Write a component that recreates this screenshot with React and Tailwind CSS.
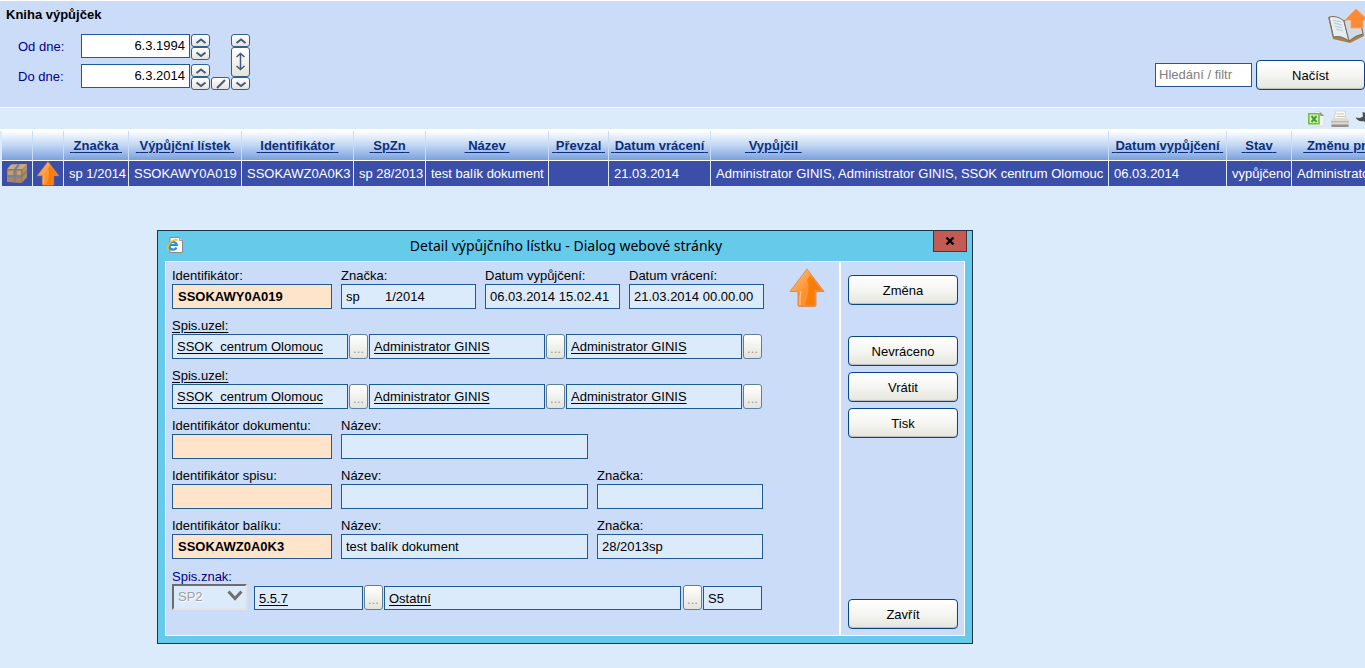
import React, { useState } from 'react';
import clsx from 'clsx';

const UpArrow = ({ className }) => (
  <svg viewBox="0 0 36 40" className={className} aria-hidden="true">
    <defs>
      <linearGradient id="arrowFill" x1="0" y1="0" x2="1" y2="1">
        <stop offset="0" stopColor="#ffc48c" />
        <stop offset="0.5" stopColor="#ff932f" />
        <stop offset="1" stopColor="#f98a1c" />
      </linearGradient>
    </defs>
    <path d="M18 1 L35 23.500 H27 V37 Q27 38.500 25.500 38.500 H10.500 Q9 38.500 9 37 V23.500 H1 Z" fill="url(#arrowFill)" stroke="#dc8a55" strokeWidth="1" strokeLinejoin="round" />
    <path d="M18 12 Q22 20 16 37 H25.500 V22 H32 L21 7 Z" fill="#f57800" opacity="0.8" />
    <path d="M11 37 Q10.500 28 12 23" stroke="#ffd0a0" strokeWidth="1" fill="none" />
  </svg>
);

const BoxIcon = () => (
  <svg viewBox="0 0 22 21" className="mx-auto h-[21px] w-[22px]" aria-hidden="true">
    <path d="M1 6.500 L5 1.500 L21 1 V14 L15.500 20 L1 19 Z" fill="#a98462" />
    <path d="M1 6.500 L5 1.500 L21 1 L16 6.500 Z" fill="#c4ac8c" />
    <path d="M16 6.500 L21 1 V14 L15.500 20 Z" fill="#b98a5a" />
    <path d="M2 8 H7 V12 H2 Z M11 8 H15 V12 H11 Z" fill="#c29e76" />
    <path d="M9 6.500 V19.500 M9 6.500 L13 1.500" stroke="#7d8286" strokeWidth="2.200" fill="none" />
    <path d="M1 13 L15.500 13.500 L21 8" stroke="#7d8286" strokeWidth="1.800" fill="none" />
    <path d="M1 6.500 H16 V19.500" stroke="#8a6a4e" strokeWidth="0.700" fill="none" />
  </svg>
);

const BookIcon = () => (
  <svg viewBox="0 0 38 36" className="h-9 w-[38px] shrink-0" aria-hidden="true">
    <path d="M1 9 L6 31 L23 35 L37 28 L35 18 L18 13 Z" fill="#a9804e" />
    <path d="M2 9 Q10 7 17 13 L22 33 Q14 27 6.500 29 Z" fill="#e3edf3" stroke="#7c6a52" strokeWidth="1" />
    <path d="M17 13 Q22 8 32 9 L36 26 Q29 27 22 33 Z" fill="#cfdce6" stroke="#7c6a52" strokeWidth="1" />
    <path d="M6 12 L14 14 M7 15 L15 17 M8 18 L15 20 M9 21 L16 23" stroke="#b4c6d3" strokeWidth="1" />
    <path d="M29 1 L41 12 H36 V20 H24 V12 H18 Z" fill="#fb8a33" stroke="#f3a56a" strokeWidth="1" />
  </svg>
);

const ExcelIcon = () => (
  <svg viewBox="0 0 18 16" className="h-4 w-[18px]" aria-hidden="true">
    <path d="M8 0.500 H13 L17 5 V15 H8 Z" fill="#f3f5f3" stroke="#d3d8d3" strokeWidth="0.800" />
    <path d="M12.500 0.500 L17 5 L13.500 5 Z" fill="#8a928a" />
    <path d="M1.800 2.800 H12 V12.800 H1.800 Z" fill="#d9f2c8" stroke="#6cc23f" strokeWidth="1.600" />
    <path d="M4.500 5 L9.500 11 M9.500 5 L4.500 11" stroke="#3fa51c" strokeWidth="2" />
  </svg>
);

const PrinterIcon = () => (
  <svg viewBox="0 0 20 18" className="h-[18px] w-5" aria-hidden="true">
    <path d="M6 1 H15 L16 9 H4 Z" fill="#faf8f4" stroke="#d2cec8" strokeWidth="0.800" />
    <path d="M6.500 4 H14 M6.500 6.500 H15" stroke="#cdc6bc" strokeWidth="1" />
    <path d="M3 8 H17 L19 11 V16 H1 V11 Z" fill="#dedbd6" />
    <path d="M1 11 H19 V12.500 H1 Z" fill="#bcb8b2" />
    <path d="M1.500 14.500 H18.500 V17 H1.500 Z" fill="#95918c" />
  </svg>
);

const WrenchIcon = () => (
  <svg viewBox="0 0 18 18" className="h-[18px] w-[18px] shrink-0" aria-hidden="true">
    <path d="M7.500 2 L11 3 L12.500 7 L17.500 13 L14.500 16 L8.500 11 Q3 12 0.500 7.500 L5 8 L8 6.500 Z" fill="#4d4f52" />
  </svg>
);

const PageIcon = () => (
  <svg viewBox="0 0 16 16" className="h-4 w-4" aria-hidden="true">
    <path d="M3 0.500 H12.500 L15.500 3.500 V15.500 H3 Z" fill="#fbfbfb" stroke="#8a8a8a" strokeWidth="1" />
    <path d="M12.500 0.500 V3.500 H15.500" fill="#dedede" stroke="#8a8a8a" strokeWidth="0.800" />
    <path d="M9.500 10.500 A3.800 3.800 0 1 1 9.800 8 H3" fill="none" stroke="#2a8fd6" strokeWidth="2.200" />
    <path d="M1.500 13.500 Q-1 10 4 5 Q8.500 1.500 10.500 3.500" fill="none" stroke="#f0bf1e" strokeWidth="1.600" />
  </svg>
);

const glyphs = {
  up: 'M3.500 7 L8 3.500 L12.500 7',
  down: 'M3.500 3.500 L8 7 L12.500 3.500',
  slash: 'M4 9 L12 1',
};

const SpinButton = ({ glyph, label }) => (
  <button
    type="button"
    aria-label={label}
    className="flex h-[13px] w-[19px] items-center justify-center rounded-[3px] border border-[#2f6195] bg-linear-to-b from-white to-[#e4e4dc]"
  >
    <svg viewBox="0 0 16 10" className="h-[10px] w-4" aria-hidden="true">
      <path d={glyphs[glyph]} fill="none" stroke="#45597c" strokeWidth="2" />
    </svg>
  </button>
);

const DateRow = ({ label, value, onChange }) => (
  <div className="flex h-[26px] items-start">
    <label className="flex items-start text-[#00008b]">
      <span className="w-[63px] leading-[26px]">{label}</span>
      <input
        value={value}
        onChange={(e) => onChange(e.target.value)}
        className="h-6 w-[109px] border border-[#1f5a92] bg-white pr-1 pb-[2px] text-right text-black outline-none"
      />
    </label>
    <div className="ml-px flex flex-col">
      <SpinButton glyph="up" label={`${label} +`} />
      <SpinButton glyph="down" label={`${label} -`} />
    </div>
  </div>
);

const PushButton = ({ children, className }) => (
  <button
    type="button"
    className={clsx(
      'h-[30px] rounded-[4px] border border-[#0d4580] bg-linear-to-b from-white via-[#f5f5f2] to-[#e6e6de] pt-[2px] text-center shadow-[inset_0_-1px_1px_#b9bdbd]',
      className
    )}
  >
    {children}
  </button>
);

const MoreButton = ({ className }) => (
  <button
    type="button"
    aria-label="Vybrat"
    className={clsx(
      'flex h-[25px] w-[19px] shrink-0 items-end justify-center rounded-[3px] border border-[#5f7f9f] bg-linear-to-b from-white to-[#e4e4dc] leading-[18px] text-[#9a9a9a]',
      className
    )}
  >
    ...
  </button>
);

const boxStyle = 'border border-[#1f5a92] px-1 outline-none';

const Field = ({ label, value = '', className, peach }) => (
  <label className={clsx('flex flex-col', className)}>
    <span className="h-[17px] leading-[18px]">{label}</span>
    <input
      readOnly
      value={value}
      className={clsx(boxStyle, 'h-[25px] w-full', peach ? 'bg-[#ffe4cc] pl-[5px] font-bold' : 'bg-[#dcebfc]')}
    />
  </label>
);

const LinkInput = ({ label, value, className }) => (
  <input readOnly aria-label={label} value={value} className={clsx(boxStyle, 'bg-[#dcebfc] underline underline-offset-2', className)} />
);

const NodeRow = () => (
  <div>
    <div className="h-[17px] leading-[18px] underline underline-offset-2">Spis.uzel:</div>
    <div className="flex gap-px">
      {['SSOK  centrum Olomouc', 'Administrator GINIS', 'Administrator GINIS'].map((value, i) => (
        <React.Fragment key={i}>
          <LinkInput label="Spis.uzel" value={value} className="h-[25px] w-44" />
          <MoreButton />
        </React.Fragment>
      ))}
    </div>
  </div>
);

const DetailDialog = () => (
  <div
    role="dialog"
    aria-labelledby="dialog-title"
    className="absolute top-[230px] left-[157px] flex w-[816px] flex-col border border-[#1e3440] bg-[#66caeb] px-[7px] pb-[7px]"
  >
    <div className="-mr-[2px] flex h-[30px] items-start">
      <div className="flex w-[34px] pt-[6px] pl-[2px]">
        <PageIcon />
      </div>
      <h2 id="dialog-title" className="flex-1 text-center font-['Noto_Sans',sans-serif] text-[14px] leading-[30px]">
        Detail výpůjčního lístku - Dialog webové stránky
      </h2>
      <button type="button" aria-label="Zavřít dialog" className="flex h-[21px] w-[34px] items-center justify-center border border-t-0 border-[#5c2d33] bg-[#c35b52]">
        <svg viewBox="0 0 10 8" className="h-2 w-[10px]" aria-hidden="true">
          <path d="M1.500 0.500 L8.500 7.500 M8.500 0.500 L1.500 7.500" stroke="#000" strokeWidth="2.400" />
        </svg>
      </button>
    </div>

    <div className="flex border border-white bg-[#cbdcf8]">
      <div className="flex flex-1 items-start justify-between border-r-2 border-white pt-[5px] pr-[14px] pb-[25px] pl-[6px]">
        <form className="flex flex-col gap-2">
          <div className="flex gap-[9px]">
            <Field label="Identifikátor:" value="SSOKAWY0A019" className="w-40" peach />
            <Field label="Značka:" value={'sp       1/2014'} className="w-[135px]" />
            <Field label="Datum vypůjčení:" value="06.03.2014 15.02.41" className="w-[135px]" />
            <Field label="Datum vrácení:" value="21.03.2014 00.00.00" className="w-[135px]" />
          </div>
          <NodeRow />
          <NodeRow />
          <div className="flex gap-[9px]">
            <Field label="Identifikátor dokumentu:" className="w-40" peach />
            <Field label="Název:" className="w-[247px]" />
          </div>
          <div className="flex gap-[9px]">
            <Field label="Identifikátor spisu:" className="w-40" peach />
            <Field label="Název:" className="w-[247px]" />
            <Field label="Značka:" className="w-[166px]" />
          </div>
          <div className="flex gap-[9px]">
            <Field label="Identifikátor balíku:" value="SSOKAWZ0A0K3" className="w-40" peach />
            <Field label="Název:" value="test balík dokument" className="w-[247px]" />
            <Field label="Značka:" value="28/2013sp" className="w-[166px]" />
          </div>
          <div>
            <label htmlFor="spis-znak" className="block h-[17px] leading-5 text-[#00008b]">
              Spis.znak:
            </label>
            <div className="flex items-end">
              <div className="relative mr-[7px]">
                <select
                  id="spis-znak"
                  disabled
                  className="block h-[26px] w-[75px] appearance-none border-2 border-t-[#6d6d6d] border-r-[#e3e3e3] border-b-[#e3e3e3] border-l-[#6d6d6d] bg-[#dcebfc] pl-1 text-[#a0a0a0] opacity-100 [text-shadow:1px_1px_0_white]"
                >
                  <option>SP2</option>
                </select>
                <svg viewBox="0 0 16 11" className="pointer-events-none absolute top-[6px] right-1 h-[11px] w-4" aria-hidden="true">
                  <path d="M1.500 1.500 L8 8.500 L14.500 1.500" fill="none" stroke="#6f6f6f" strokeWidth="3" />
                </svg>
              </div>
              <LinkInput label="Kód" value="5.5.7" className="h-6 w-[109px]" />
              <MoreButton className="mx-px" />
              <LinkInput label="Text" value="Ostatní" className="h-6 w-[297px]" />
              <MoreButton className="mr-px ml-[2px]" />
              <input readOnly aria-label="Skartační znak" value="S5" className={clsx(boxStyle, 'h-6 w-[59px] bg-[#dcebfc]')} />
            </div>
          </div>
        </form>
        <UpArrow className="mt-px h-10 w-9" />
      </div>

      <div className="flex w-[123px] flex-col gap-[6px] pt-[13px] pr-[6px] pb-[6px] pl-[7px]">
        <PushButton className="mb-[25px]">Změna</PushButton>
        <PushButton>Nevráceno</PushButton>
        <PushButton>Vrátit</PushButton>
        <PushButton>Tisk</PushButton>
        <PushButton className="mt-auto">Zavřít</PushButton>
      </div>
    </div>
  </div>
);

const columns = [
  { title: '', width: 'w-[31px]' },
  { title: '', width: 'w-[31px]' },
  { title: 'Značka', width: 'w-[65px]', value: 'sp 1/2014' },
  { title: 'Výpůjční lístek', width: 'w-[113px]', value: 'SSOKAWY0A019' },
  { title: 'Identifikátor', width: 'w-[112px]', value: 'SSOKAWZ0A0K3' },
  { title: 'SpZn', width: 'w-[72px]', value: 'sp 28/2013' },
  { title: 'Název', width: 'w-[123px]', value: 'test balík dokument' },
  { title: 'Převzal', width: 'w-[60px]', value: '' },
  { title: 'Datum vrácení', width: 'w-[102px]', value: '21.03.2014' },
  {
    title: 'Vypůjčil',
    width: 'w-[398px]',
    value: 'Administrator GINIS, Administrator GINIS, SSOK centrum Olomouc',
    align: 'pl-[34px] text-left',
  },
  { title: 'Datum vypůjčení', width: 'w-[118px]', value: '06.03.2014' },
  { title: 'Stav', width: 'w-[65px]', value: 'vypůjčeno' },
  { title: 'Změnu provedl', width: 'w-[124px]', value: 'Administrator GINIS' },
];

const LoansTable = () => (
  <div className="overflow-hidden border-t-2 border-white pl-[2px]">
    <table className="w-[1414px] table-fixed border-separate border-spacing-0 whitespace-nowrap">
      <colgroup>
        {columns.map((col, i) => (
          <col key={i} className={col.width} />
        ))}
      </colgroup>
      <thead>
        <tr className="h-[30px]">
          {columns.map((col, i) => (
            <th
              key={i}
              className={clsx(
                'border-r border-b border-[#c9dcf6] border-b-white bg-linear-to-b from-white via-[#c0d5f3] to-[#7aa1dc] p-0 font-bold',
                col.align || 'text-center'
              )}
            >
              {col.title && (
                <a href="#" className="text-[#0b2f7a] underline underline-offset-2">
                  &nbsp;{col.title}&nbsp;
                </a>
              )}
            </th>
          ))}
        </tr>
      </thead>
      <tbody>
        <tr className="h-[25px] text-white">
          {columns.map((col, i) => (
            <td key={i} className={clsx('overflow-hidden border-r border-[#dcebfc] bg-[#3b4fa8] py-0 pr-0', i > 1 ? 'pl-[5px]' : 'pl-0')}>
              {i === 0 && <BoxIcon />}
              {i === 1 && <UpArrow className="mx-auto h-[25px] w-6" />}
              {col.value}
            </td>
          ))}
        </tr>
      </tbody>
    </table>
  </div>
);

export default function App() {
  const [from, setFrom] = useState('6.3.1994');
  const [to, setTo] = useState('6.3.2014');
  const [filter, setFilter] = useState('');

  return (
    <div className="relative min-h-screen overflow-hidden bg-[#dcebfc] font-['Liberation_Sans',Arial,sans-serif] text-[13px] leading-4 text-black">
      {/* Header panel */}
      <header className="flex h-[108px] justify-between border-y border-white bg-[#cbdcf8]">
        <div>
          <h1 className="pt-[6px] pl-[6px] font-bold">Kniha výpůjček</h1>
          <div className="flex pt-[11px] pl-[18px]">
            <div className="flex flex-col gap-1">
              <DateRow label="Od dne:" value={from} onChange={setFrom} />
              <DateRow label="Do dne:" value={to} onChange={setTo} />
            </div>
            <div className="ml-px flex items-end">
              <SpinButton glyph="slash" label="Stejné datum" />
            </div>
            <div className="ml-px flex flex-col">
              <SpinButton glyph="up" label="Posunout nahoru" />
              <button
                type="button"
                aria-label="Posunout obě data"
                className="flex h-[30px] w-[19px] items-center justify-center rounded-[3px] border border-[#2f6195] bg-linear-to-b from-white to-[#e4e4dc]"
              >
                <svg viewBox="0 0 11 22" className="h-[22px] w-[11px]" aria-hidden="true">
                  <path d="M1.500 6 L5.500 2.500 L9.500 6 M5.500 3 V18 M1.500 15 L5.500 18.500 L9.500 15" fill="none" stroke="#45597c" strokeWidth="1.500" />
                </svg>
              </button>
              <SpinButton glyph="down" label="Posunout dolů" />
            </div>
          </div>
        </div>

        <div className="flex flex-col items-end justify-between pt-[7px] pb-[17px]">
          <BookIcon />
          <div className="flex items-center gap-1">
            <input
              aria-label="Hledání / filtr"
              placeholder="Hledání / filtr"
              value={filter}
              onChange={(e) => setFilter(e.target.value)}
              className="h-6 w-[97px] border border-[#1f5a92] bg-white px-[3px] pb-[2px] outline-none placeholder:text-[#808080]"
            />
            <PushButton className="w-[109px]">Načíst</PushButton>
          </div>
        </div>
      </header>

      {/* Table tools */}
      <div className="flex h-[21px] items-center justify-end gap-[5px]">
        <button type="button" aria-label="Export do Excelu">
          <ExcelIcon />
        </button>
        <button type="button" aria-label="Tisk">
          <PrinterIcon />
        </button>
        <button type="button" aria-label="Nastavení" className="w-[10px] overflow-hidden">
          <WrenchIcon />
        </button>
      </div>

      <LoansTable />
      <DetailDialog />
    </div>
  );
}
